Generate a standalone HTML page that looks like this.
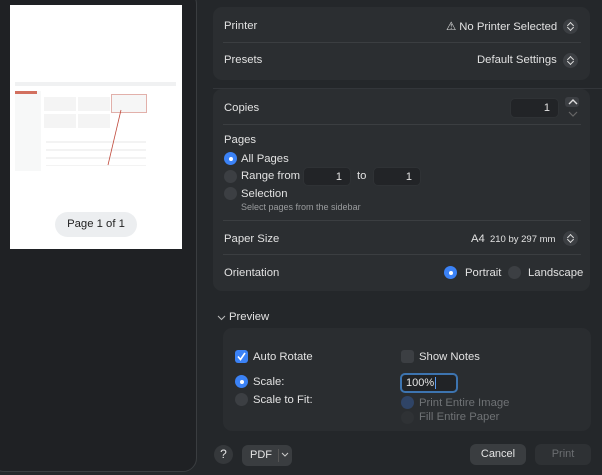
<!DOCTYPE html>
<html><head><meta charset="utf-8"><style>
*{box-sizing:border-box;margin:0;padding:0}
body{width:602px;height:475px;overflow:hidden;background:#24272a;font-family:"Liberation Sans",sans-serif;color:#e4e4e4;font-size:11px;position:relative}
.abs{position:absolute}
.side{left:-10px;top:-10px;width:207px;height:482px;background:#1f2124;border:1px solid #3a3d40;border-radius:14px}
.card{background:#2b2e31;border-radius:9px;position:absolute}
.sep{position:absolute;height:1px;background:#3b3e41}
.lbl{position:absolute;font-size:11.3px;color:#e2e2e2}
.step{position:absolute;width:15px;height:15px;border-radius:50%;background:#3c3f43}
.step:before,.step:after{content:"";position:absolute;left:5px;width:4px;height:4px;border-left:1.3px solid #ddd;border-top:1.3px solid #ddd}
.step:before{top:4px;transform:rotate(45deg)}
.step:after{top:6px;transform:rotate(225deg)}
.field{position:absolute;background:#222427;border:1px solid #2f3235;border-radius:5px;text-align:right;padding-right:8px;font-size:11px;line-height:18px}
.rad{position:absolute;width:13px;height:13px;border-radius:50%;background:#3c3f43}
.rad.on{background:#3b82f6}
.rad.on:after{content:"";position:absolute;left:4.5px;top:4.5px;width:4px;height:4px;border-radius:50%;background:#fff}
.btn{position:absolute;background:#3a3d40;border-radius:6px;text-align:center;font-size:11px;line-height:21px}
</style></head><body>
<div class="abs side"></div>
<div class="abs" style="left:10px;top:5px;width:172px;height:244px;background:#fff"></div>
<!-- mini preview -->
<div class="abs" style="left:15px;top:82px;width:161px;height:4px;background:#f0f1f2"></div>
<div class="abs" style="left:15px;top:91px;width:26px;height:80px;background:#f7f8f8"></div>
<div class="abs" style="left:15px;top:91px;width:22px;height:3px;background:#d2705f"></div>
<div class="abs" style="left:44px;top:97px;width:32px;height:14px;background:#f4f4f4"></div>
<div class="abs" style="left:78px;top:97px;width:32px;height:14px;background:#f4f4f4"></div>
<div class="abs" style="left:111px;top:94px;width:36px;height:19px;background:#f6f6f6;border:1px solid #e2b0aa"></div>
<div class="abs" style="left:44px;top:114px;width:32px;height:14px;background:#f4f4f4"></div>
<div class="abs" style="left:78px;top:114px;width:32px;height:14px;background:#f4f4f4"></div>
<div class="abs" style="left:46px;top:138px;width:100px;height:28px;background:repeating-linear-gradient(#fff 0 3px,#f3f3f3 3px 5px,#fff 5px 8px)"></div>
<svg class="abs" style="left:100px;top:105px" width="30" height="65"><line x1="21" y1="5" x2="8" y2="60" stroke="#c0493b" stroke-width="0.8"/></svg>
<div class="abs" style="left:55px;top:212px;width:82px;height:25px;border-radius:13px;background:#eceef0;color:#222;font-size:11.3px;text-align:center;line-height:25px">Page 1 of 1</div>

<div class="card" style="left:213px;top:7px;width:377px;height:73px"></div>
<div class="lbl" style="left:224px;top:20px">Printer</div>
<div class="lbl" style="left:446px;top:20px">⚠ No Printer Selected</div>
<div class="step" style="left:563px;top:19px"></div>
<div class="sep" style="left:223px;top:42px;width:358px"></div>
<div class="lbl" style="left:224px;top:54px">Presets</div>
<div class="lbl" style="left:477px;top:54px">Default Settings</div>
<div class="step" style="left:563px;top:53px"></div>

<div class="sep" style="left:213px;top:88px;width:389px;background:#33363a"></div>
<div class="card" style="left:213px;top:89px;width:377px;height:202px"></div>
<div class="lbl" style="left:224px;top:102px">Copies</div>
<div class="field" style="left:510px;top:98px;width:49px;height:20px">1</div>
<div class="abs" style="left:565px;top:97px;width:14px;height:10px;border-radius:3px;background:#3c3f43"></div>
<svg class="abs" style="left:566px;top:97px" width="14" height="22"><path d="M3 7 L7 3 L11 7" fill="none" stroke="#ddd" stroke-width="1.4"/><path d="M3 15 L7 19 L11 15" fill="none" stroke="#666" stroke-width="1.2"/></svg>
<div class="sep" style="left:223px;top:124px;width:358px"></div>
<div class="lbl" style="left:224px;top:134px">Pages</div>
<div class="rad on" style="left:224px;top:152px"></div><div class="lbl" style="left:241px;top:153px">All Pages</div>
<div class="rad" style="left:224px;top:170px"></div><div class="lbl" style="left:241px;top:170px">Range from</div>
<div class="field" style="left:303px;top:167px;width:48px;height:19px">1</div>
<div class="lbl" style="left:357px;top:170px">to</div>
<div class="field" style="left:373px;top:167px;width:48px;height:19px">1</div>
<div class="rad" style="left:224px;top:187px"></div><div class="lbl" style="left:241px;top:188px">Selection</div>
<div class="lbl" style="left:241px;top:202px;font-size:9px;color:#9a9c9e">Select pages from the sidebar</div>
<div class="sep" style="left:223px;top:220px;width:358px"></div>
<div class="lbl" style="left:224px;top:233px">Paper Size</div>
<div class="lbl" style="left:471px;top:233px">A4 <span style="font-size:9.5px;margin-left:2px">210 by 297 mm</span></div>
<div class="step" style="left:563px;top:231px"></div>
<div class="sep" style="left:223px;top:254px;width:358px"></div>
<div class="lbl" style="left:224px;top:267px">Orientation</div>
<div class="rad on" style="left:444px;top:266px"></div><div class="lbl" style="left:465px;top:267px">Portrait</div>
<div class="rad" style="left:508px;top:266px"></div><div class="lbl" style="left:528px;top:267px">Landscape</div>

<svg class="abs" style="left:217px;top:313px" width="9" height="9"><path d="M1 3 L4.5 6.5 L8 3" fill="none" stroke="#bbb" stroke-width="1"/></svg>
<div class="lbl" style="left:229px;top:311px">Preview</div>
<div class="card" style="left:223px;top:328px;width:368px;height:103px;background:#2a2d30"></div>
<div class="abs" style="left:235px;top:350px;width:13px;height:13px;border-radius:3px;background:#3b82f6"></div>
<svg class="abs" style="left:235px;top:350px" width="13" height="13"><path d="M3 6.5 L5.5 9.5 L10 3" fill="none" stroke="#fff" stroke-width="1.6"/></svg>
<div class="lbl" style="left:253px;top:351px">Auto Rotate</div>
<div class="abs" style="left:401px;top:350px;width:13px;height:13px;border-radius:3px;background:#3c3f43"></div>
<div class="lbl" style="left:419px;top:351px">Show Notes</div>
<div class="rad on" style="left:235px;top:375px"></div><div class="lbl" style="left:253px;top:376px">Scale:</div>
<div class="rad" style="left:235px;top:393px"></div><div class="lbl" style="left:253px;top:394px">Scale to Fit:</div>
<div class="abs" style="left:400px;top:373px;width:58px;height:20px;border:2px solid #3d74b0;border-radius:5px;background:#212326;padding-left:4px;font-size:11px;line-height:16px">100%<span style="border-left:1px solid #5b9cf0;margin-left:1px"></span></div>
<div class="rad" style="left:401px;top:396px;background:#2f4466"></div>
<div class="lbl" style="left:419px;top:397px;color:#6f7275">Print Entire Image</div>
<div class="rad" style="left:401px;top:411px;background:#2f3235"></div>
<div class="lbl" style="left:419px;top:411px;color:#6f7275">Fill Entire Paper</div>

<div class="abs" style="left:214px;top:445px;width:19px;height:19px;border-radius:50%;background:#35383b;text-align:center;line-height:19px;font-size:12px">?</div>
<div class="btn" style="left:242px;top:445px;width:50px;text-align:left;padding-left:8px">PDF</div>
<div class="abs" style="left:278px;top:449px;width:1px;height:13px;background:#555"></div>
<svg class="abs" style="left:281px;top:452px" width="8" height="6"><path d="M1 1 L4 4 L7 1" fill="none" stroke="#ccc" stroke-width="1"/></svg>
<div class="btn" style="left:470px;top:444px;width:56px">Cancel</div>
<div class="btn" style="left:535px;top:444px;width:56px;background:#2e3134;color:#6b6e71">Print</div>
</body></html>
